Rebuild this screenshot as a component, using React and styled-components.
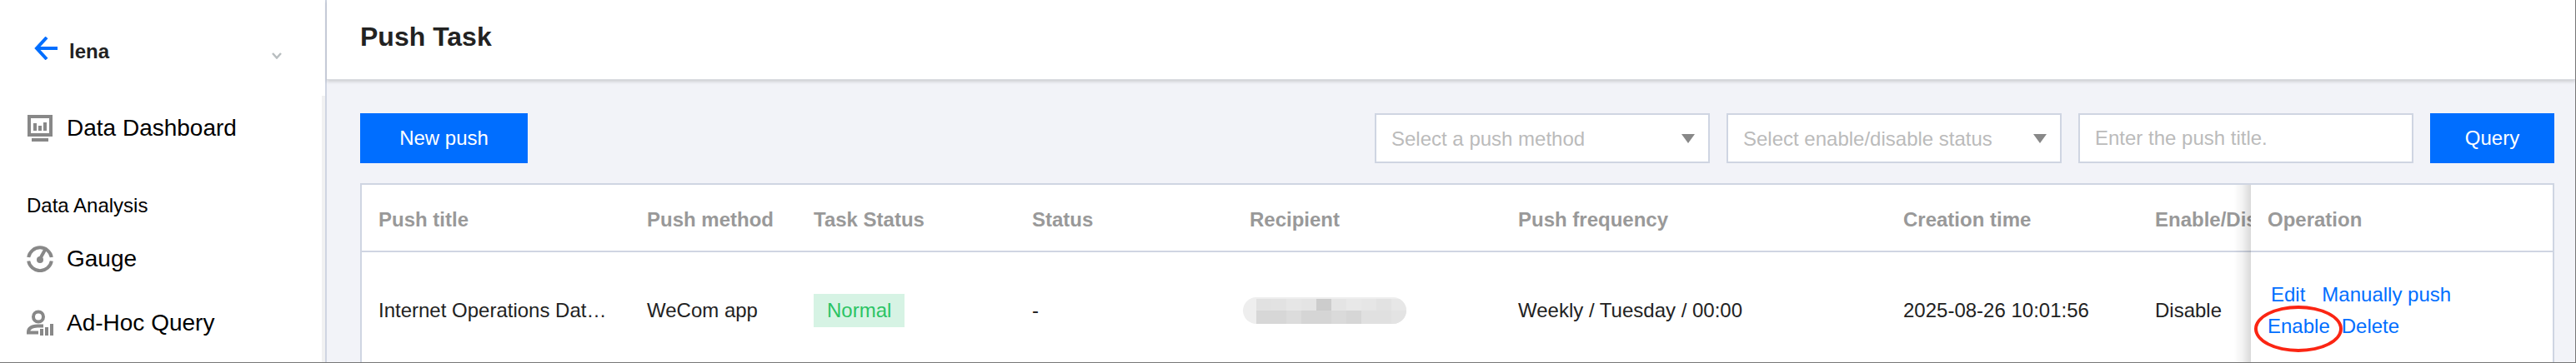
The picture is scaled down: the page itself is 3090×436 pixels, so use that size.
import React, { useState } from "react";
import styled, { createGlobalStyle } from "styled-components";

const columns = [
  { label: "Push title", width: 322 },
  { label: "Push method", width: 200 },
  { label: "Task Status", width: 262 },
  { label: "Status", width: 261 },
  { label: "Recipient", width: 322 },
  { label: "Push frequency", width: 462 },
  { label: "Creation time", width: 302 },
  { label: "Enable/Disable", width: 220 },
];

const tasks = [
  {
    title: "Internet Operations Data Report",
    method: "WeCom app",
    taskStatus: "Normal",
    status: "-",
    frequency: "Weekly / Tuesday / 00:00",
    created: "2025-08-26 10:01:56",
    enabled: "Disable",
  },
];

const mosaicTop = ["#e1e1e1", "#e2e2e2", "#e6e6e6", "#e4e4e4", "#cccccc", "#e4e4e4", "#e8e8e8", "#e6e6e6", "#e2e2e2", "#e7e7e7"];
const mosaicBottom = ["#d7d7d7", "#d7d7d7", "#dcdcdc", "#d5d5d5", "#d5d5d5", "#dadada", "#d6d6d6", "#e0e0e0", "#e0e0e0", "#e3e3e3"];

const BackIcon = () => (
  <svg width="28" height="28" viewBox="0 0 28 28" fill="none" stroke="#006eff" strokeWidth="4" aria-hidden="true">
    <path d="M28 14H3M15 1L3 14L15 27" />
  </svg>
);

const ChevronIcon = () => (
  <svg width="12" height="8" viewBox="0 0 12 8" fill="none" stroke="#b8bec0" strokeWidth="2.5" aria-hidden="true">
    <path d="M1 1L6 6.5L11 1" />
  </svg>
);

const DashboardIcon = () => (
  <svg width="32" height="32" viewBox="0 0 32 32" fill="#888" aria-hidden="true">
    <path fillRule="evenodd" d="M1 0H31V26H1ZM5 4V22H27V4Z" />
    <path d="M8 10H12V19H8ZM14 13H18V19H14ZM20 9H24V19H20ZM6 28H26V32H6Z" />
  </svg>
);

const GaugeIcon = () => (
  <svg width="32" height="32" viewBox="0 0 32 32" fill="none" stroke="#888" strokeWidth="4" aria-hidden="true">
    <path d="M2.2 14A14 14 0 0 1 29.8 14" />
    <path d="M2.2 18.5A14 14 0 0 0 29.8 18.5" />
    <path d="M16.5 15L22 5" />
    <circle cx="16" cy="17" r="4" fill="#888" stroke="none" />
  </svg>
);

const UserChartIcon = () => (
  <svg width="32" height="32" viewBox="0 0 32 32" fill="none" stroke="#888" strokeWidth="4" aria-hidden="true">
    <circle cx="14" cy="8.5" r="6" />
    <path d="M20 19.5H13Q2 20 2 27V27.5H14" />
    <path d="M18 23V31M24 21V31M30 17V31" />
  </svg>
);

const RecipientMask = () => (
  <Mosaic width="196" height="32" viewBox="0 0 196 32" role="img" aria-label="Hidden recipient">
    <clipPath id="pill">
      <rect width="196" height="32" rx="16" />
    </clipPath>
    <g clipPath="url(#pill)" shapeRendering="crispEdges">
      <rect width="196" height="32" fill="#eeeeee" />
      {mosaicTop.map((color, i) => (
        <rect key={i} x={16 + i * 18} y="2" width="18" height="14" fill={color} />
      ))}
      {mosaicBottom.map((color, i) => (
        <rect key={i} x={16 + i * 18} y="16" width="18" height="16" fill={color} />
      ))}
    </g>
  </Mosaic>
);

const Select = ({ label, options, value, onChange }) => (
  <SelectWrap>
    <SelectBox aria-label={label} value={value} onChange={(e) => onChange(e.target.value)}>
      <option value="">{label}</option>
      {options.map((option) => (
        <option key={option} value={option}>{option}</option>
      ))}
    </SelectBox>
    <SelectArrow width="16" height="11" viewBox="0 0 16 11" aria-hidden="true">
      <path d="M0 0H16L8 11Z" fill="#888" />
    </SelectArrow>
  </SelectWrap>
);

const App = () => {
  const [method, setMethod] = useState("");
  const [status, setStatus] = useState("");
  const [title, setTitle] = useState("");

  return (
    <Page>
      <GlobalStyle />
      <Sidebar>
        <SidebarHead>
          <BackLink href="#back" aria-label="Back">
            <BackIcon />
          </BackLink>
          <ProjectButton type="button">
            lena
            <ChevronIcon />
          </ProjectButton>
        </SidebarHead>
        <Nav>
          <NavItem href="#dashboard"><DashboardIcon />Data Dashboard</NavItem>
          <NavHeading>Data Analysis</NavHeading>
          <NavItem href="#gauge"><GaugeIcon />Gauge</NavItem>
          <NavItem href="#query"><UserChartIcon />Ad-Hoc Query</NavItem>
        </Nav>
      </Sidebar>

      <Main>
        <Header>
          <Title>Push Task</Title>
        </Header>
        <Content>
          <Toolbar>
            <Button type="button" $width={201}>New push</Button>
            <Filters onSubmit={(e) => e.preventDefault()}>
              <Select label="Select a push method" options={["WeCom app", "Email"]} value={method} onChange={setMethod} />
              <Select label="Select enable/disable status" options={["Enable", "Disable"]} value={status} onChange={setStatus} />
              <TextInput
                aria-label="Push title"
                placeholder="Enter the push title."
                value={title}
                onChange={(e) => setTitle(e.target.value)}
              />
              <Button type="submit" $width={149}>Query</Button>
            </Filters>
          </Toolbar>

          <TableWrap>
            <Table>
              <colgroup>
                {columns.map((column) => (
                  <Col key={column.label} $width={column.width} />
                ))}
                <Col $width={362} />
              </colgroup>
              <thead>
                <tr>
                  {columns.map((column) => (
                    <HeadCell key={column.label}>{column.label}</HeadCell>
                  ))}
                  <FixedHeadCell>Operation</FixedHeadCell>
                </tr>
              </thead>
              <tbody>
                {tasks.map((task) => (
                  <tr key={task.title}>
                    <Cell>{task.title}</Cell>
                    <Cell>{task.method}</Cell>
                    <Cell><Tag>{task.taskStatus}</Tag></Cell>
                    <Cell>{task.status}</Cell>
                    <Cell $overflow><RecipientMask /></Cell>
                    <Cell>{task.frequency}</Cell>
                    <Cell>{task.created}</Cell>
                    <Cell>{task.enabled}</Cell>
                    <FixedCell $overflow>
                      <Actions $indent={4} $gap={20}>
                        <ActionLink href="#edit">Edit</ActionLink>
                        <ActionLink href="#push">Manually push</ActionLink>
                      </Actions>
                      <Actions $indent={0} $gap={14}>
                        <ActionLink href="#enable" $circled>Enable</ActionLink>
                        <ActionLink href="#delete">Delete</ActionLink>
                      </Actions>
                    </FixedCell>
                  </tr>
                ))}
              </tbody>
            </Table>
          </TableWrap>
        </Content>
      </Main>
    </Page>
  );
};

const GlobalStyle = createGlobalStyle`
  * {
    box-sizing: border-box;
  }

  body {
    margin: 0;
    font-family: "Liberation Sans", Arial, sans-serif;
    font-size: 24px;
    color: #222;
  }

  button, input, select {
    font: inherit;
  }

  a {
    text-decoration: none;
  }
`;

const Page = styled.div`
  display: flex;
  height: 100vh;
  overflow: hidden;
  border: solid #777;
  border-width: 0 1px 1px 0;
`;

const Sidebar = styled.aside`
  flex: 0 0 392px;
  display: flex;
  flex-direction: column;
  background: #fff;
  border-right: 2px solid #cfd5e2;
`;

const SidebarHead = styled.div`
  flex: none;
  display: flex;
  align-items: center;
  gap: 14px;
  height: 115px;
  padding: 0 52px 0 41px;
`;

const BackLink = styled.a`
  display: flex;
`;

const ProjectButton = styled.button`
  flex: 1;
  display: flex;
  align-items: center;
  justify-content: space-between;
  padding: 8px 0 0;
  border: none;
  background: none;
  color: #222;
  font-weight: 700;
  cursor: pointer;

  svg {
    margin-top: 10px;
  }
`;

const Nav = styled.nav`
  flex: 1;
  border-right: 4px solid #f1f1f2;
`;

const NavItem = styled.a`
  display: flex;
  align-items: center;
  gap: 16px;
  height: 77px;
  padding-left: 32px;
  color: #000;
  font-size: 28px;
`;

const NavHeading = styled.div`
  padding: 39px 32px 9px;
  line-height: 32px;
  color: #000;
`;

const Main = styled.main`
  flex: 1;
  min-width: 0;
  background: #f2f3f8;
`;

const Header = styled.header`
  padding: 24px 40px 31px;
  background: #fff;
  border-bottom: 1px solid #d9dbe0;
  box-shadow: 0 2px 4px rgba(0, 0, 0, 0.16);
`;

const Title = styled.h1`
  margin: 0;
  font-size: 32px;
  line-height: 40px;
`;

const Content = styled.div`
  padding: 40px 25px 0 40px;
`;

const Toolbar = styled.div`
  display: flex;
  justify-content: space-between;
  margin-bottom: 24px;
`;

const Filters = styled.form`
  display: flex;
  gap: 20px;
`;

const Button = styled.button`
  width: ${(props) => props.$width}px;
  height: 60px;
  border: none;
  background: #006eff;
  color: #fff;
  cursor: pointer;
`;

const SelectWrap = styled.div`
  position: relative;
`;

const SelectBox = styled.select`
  width: 402px;
  height: 60px;
  padding: 0 48px 0 18px;
  border: 2px solid #cfd5e2;
  border-radius: 0;
  background: #fff;
  color: #bbb;
  outline: none;
  appearance: none;
`;

const SelectArrow = styled.svg`
  position: absolute;
  right: 18px;
  top: 25px;
  pointer-events: none;
`;

const TextInput = styled.input`
  width: 402px;
  height: 60px;
  padding: 0 18px;
  border: 2px solid #cfd5e2;
  outline: none;

  &::placeholder {
    color: #bbb;
  }
`;

const TableWrap = styled.div`
  overflow-x: hidden;
  border: 2px solid #cfd5e2;
  background: #fff;
`;

const Table = styled.table`
  width: 100%;
  table-layout: fixed;
  border-collapse: separate;
  border-spacing: 0;
`;

const Col = styled.col`
  width: ${(props) => props.$width}px;
`;

const HeadCell = styled.th`
  height: 81px;
  padding: 4px 20px 0;
  border-bottom: 2px solid #cfd5e2;
  background: #fff;
  color: #999;
  text-align: left;
  white-space: nowrap;
`;

const Cell = styled.td`
  height: 140px;
  padding: 0 20px;
  background: #fff;
  overflow: ${(props) => (props.$overflow ? "visible" : "hidden")};
  text-overflow: ellipsis;
  white-space: nowrap;
`;

const shade = `
  content: "";
  position: absolute;
  top: 0;
  bottom: 0;
  right: 100%;
  width: 20px;
  background: linear-gradient(to left, rgba(0, 0, 0, 0.15), rgba(0, 0, 0, 0.05) 50%, rgba(0, 0, 0, 0));
  pointer-events: none;
`;

const FixedHeadCell = styled(HeadCell)`
  position: sticky;
  right: 0;

  &::before {
    ${shade}
    bottom: -2px;
  }
`;

const FixedCell = styled(Cell)`
  position: sticky;
  right: 0;

  &::before {
    ${shade}
  }
`;

const Tag = styled.span`
  display: inline-block;
  padding: 0 16px;
  line-height: 40px;
  background: #d6f3e4;
  color: #2bc465;
`;

const Mosaic = styled.svg`
  display: block;
  margin-left: -8px;
`;

const Actions = styled.div`
  display: flex;
  gap: ${(props) => props.$gap}px;
  padding-left: ${(props) => props.$indent}px;
  line-height: 38px;
`;

const ActionLink = styled.a`
  position: relative;
  color: #006eff;

  /* red ring round the highlighted action */
  &::after {
    content: "";
    display: ${(props) => (props.$circled ? "block" : "none")};
    position: absolute;
    inset: -6px -15px -12px -16px;
    border: 4px solid #fb2513;
    border-radius: 50%;
    pointer-events: none;
  }
`;

export default App;
